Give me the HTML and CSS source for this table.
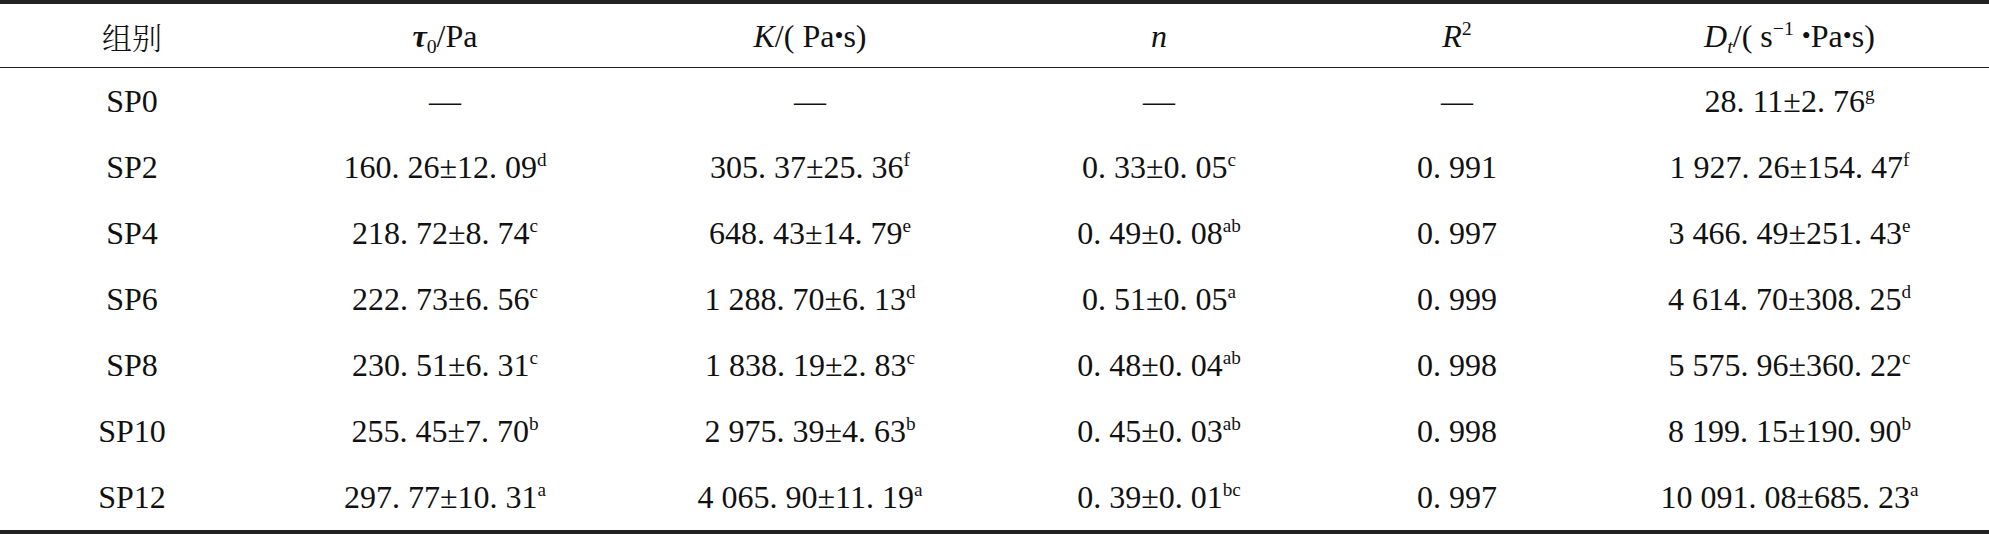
FILE: index.html
```html
<!DOCTYPE html>
<html lang="zh">
<head>
<meta charset="utf-8">
<title>表</title>
<link rel="stylesheet" href="styles.css">
</head>
<body>
<div class="table">
  <div class="row head">
    <div class="cell cjk">组别</div>
    <div class="cell"><i class="tau">τ</i><sub class="sub">0</sub>/Pa</div>
    <div class="cell"><i>K</i>/( Pa<span class="dot">•</span>s)</div>
    <div class="cell"><i>n</i></div>
    <div class="cell"><i>R</i><sup class="hsup">2</sup></div>
    <div class="cell"><i>D</i><sub class="sub"><i>t</i></sub>/( s<sup class="hsup">−1</sup> <span class="dot">•</span>Pa<span class="dot">•</span>s)</div>
  </div>
  <div class="row">
    <div class="cell">SP0</div>
    <div class="cell">—</div>
    <div class="cell">—</div>
    <div class="cell">—</div>
    <div class="cell">—</div>
    <div class="cell">28. 11±2. 76<sup class="sup">g</sup></div>
  </div>
  <div class="row">
    <div class="cell">SP2</div>
    <div class="cell">160. 26±12. 09<sup class="sup">d</sup></div>
    <div class="cell">305. 37±25. 36<sup class="sup">f</sup></div>
    <div class="cell">0. 33±0. 05<sup class="sup">c</sup></div>
    <div class="cell">0. 991</div>
    <div class="cell">1 927. 26±154. 47<sup class="sup">f</sup></div>
  </div>
  <div class="row">
    <div class="cell">SP4</div>
    <div class="cell">218. 72±8. 74<sup class="sup">c</sup></div>
    <div class="cell">648. 43±14. 79<sup class="sup">e</sup></div>
    <div class="cell">0. 49±0. 08<sup class="sup">ab</sup></div>
    <div class="cell">0. 997</div>
    <div class="cell">3 466. 49±251. 43<sup class="sup">e</sup></div>
  </div>
  <div class="row">
    <div class="cell">SP6</div>
    <div class="cell">222. 73±6. 56<sup class="sup">c</sup></div>
    <div class="cell">1 288. 70±6. 13<sup class="sup">d</sup></div>
    <div class="cell">0. 51±0. 05<sup class="sup">a</sup></div>
    <div class="cell">0. 999</div>
    <div class="cell">4 614. 70±308. 25<sup class="sup">d</sup></div>
  </div>
  <div class="row">
    <div class="cell">SP8</div>
    <div class="cell">230. 51±6. 31<sup class="sup">c</sup></div>
    <div class="cell">1 838. 19±2. 83<sup class="sup">c</sup></div>
    <div class="cell">0. 48±0. 04<sup class="sup">ab</sup></div>
    <div class="cell">0. 998</div>
    <div class="cell">5 575. 96±360. 22<sup class="sup">c</sup></div>
  </div>
  <div class="row">
    <div class="cell">SP10</div>
    <div class="cell">255. 45±7. 70<sup class="sup">b</sup></div>
    <div class="cell">2 975. 39±4. 63<sup class="sup">b</sup></div>
    <div class="cell">0. 45±0. 03<sup class="sup">ab</sup></div>
    <div class="cell">0. 998</div>
    <div class="cell">8 199. 15±190. 90<sup class="sup">b</sup></div>
  </div>
  <div class="row">
    <div class="cell">SP12</div>
    <div class="cell">297. 77±10. 31<sup class="sup">a</sup></div>
    <div class="cell">4 065. 90±11. 19<sup class="sup">a</sup></div>
    <div class="cell">0. 39±0. 01<sup class="sup">bc</sup></div>
    <div class="cell">0. 997</div>
    <div class="cell">10 091. 08±685. 23<sup class="sup">a</sup></div>
  </div>
</div>
</body>
</html>
```
FILE: styles.css
```css
html, body {
  margin: 0;
  padding: 0;
  background: #ffffff;
}

body {
  width: 1989px;
  height: 534px;
  overflow: hidden;
  font-family: "Liberation Serif", "DejaVu Serif", serif;
  font-size: 32px;
  color: #111111;
}

.table {
  border-top: 4px solid #222222;
  border-bottom: 4px solid #222222;
}

.row {
  display: grid;
  grid-template-columns: 264px 362px 368px 330px 266px 399px;
  align-items: center;
  height: 66px;
}

.head {
  height: 63px;
  border-bottom: 1px solid #222222;
}

.cell {
  text-align: center;
  white-space: nowrap;
  line-height: 1;
}

.cjk {
  font-family: "Noto Serif CJK SC", "Noto Sans CJK SC", serif;
  font-size: 30px;
  font-weight: 300;
}

.tau {
  font-weight: bold;
}

.sub {
  font-size: 0.62em;
  vertical-align: -0.3em;
  line-height: 0;
}

.hsup {
  font-size: 0.62em;
  vertical-align: 0.6em;
  line-height: 0;
}

.sup {
  font-size: 0.6em;
  vertical-align: 0.62em;
  line-height: 0;
}

.dot {
  font-size: 0.8em;
  position: relative;
  top: -0.08em;
}
```
